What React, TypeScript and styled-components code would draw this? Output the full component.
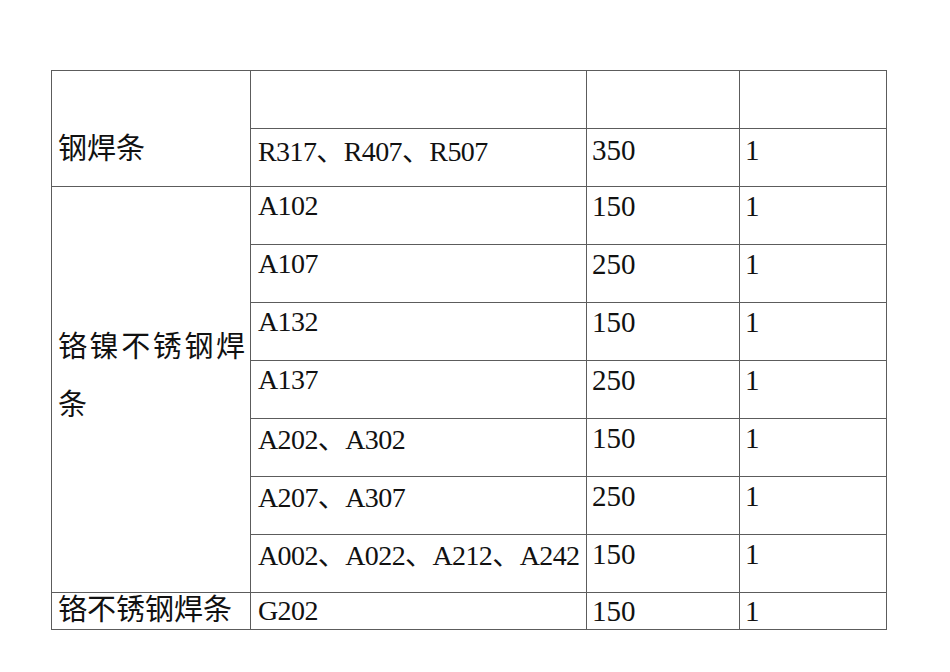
import React from "react";
import styled, { createGlobalStyle } from "styled-components";

const GlobalStyle = createGlobalStyle`
  html, body {
    margin: 0;
    padding: 0;
    background: #ffffff;
  }
  body {
    font-family: "Liberation Serif", "Noto Sans CJK SC", serif;
    color: #111111;
  }
`;

const Page = styled.div`
  width: 950px;
  height: 672px;
  box-sizing: border-box;
  padding: 70px 0 0 51px;
  overflow: hidden;
`;

const Table = styled.table`
  border-collapse: collapse;
  table-layout: fixed;
  width: 835px;
  font-size: 29px;
`;

const Row = styled.tr<{ $h?: number }>`
  height: ${(p) => p.$h ?? 58}px;
`;

const Cell = styled.td<{ $pt?: number; $pl?: number; $code?: boolean }>`
  border: 1px solid #5c5c5c;
  vertical-align: top;
  padding: ${(p) => p.$pt ?? 1}px 2px 0 ${(p) => p.$pl ?? 5}px;
  line-height: 36px;
  font-size: ${(p) => (p.$code ? 28 : 29)}px;
  letter-spacing: ${(p) => (p.$code ? "-0.6px" : "0")};
  white-space: nowrap;
  overflow: hidden;
`;

const Label = styled.td<{ $pt?: number }>`
  border: 1px solid #5c5c5c;
  vertical-align: top;
  padding: ${(p) => p.$pt ?? 0}px 5px 0 6px;
  line-height: 34px;
  white-space: nowrap;
  overflow: hidden;
`;

const WrapLabel = styled.td`
  border: 1px solid #5c5c5c;
  vertical-align: top;
  padding: 131px 5px 0 6px;
  line-height: 58px;
  text-align: justify;
`;

type Item = { code: string; amount: string; count: string; drop?: number };

const chromeNickel: Item[] = [
  { code: "A102", amount: "150", count: "1" },
  { code: "A107", amount: "250", count: "1" },
  { code: "A132", amount: "150", count: "1" },
  { code: "A137", amount: "250", count: "1" },
  { code: "A202、A302", amount: "150", count: "1", drop: 2 },
  { code: "A207、A307", amount: "250", count: "1", drop: 2 },
  { code: "A002、A022、A212、A242", amount: "150", count: "1", drop: 2 },
];

export default function App() {
  return (
    <Page>
      <GlobalStyle />
      <Table>
        <colgroup>
          <col style={{ width: 199 }} />
          <col style={{ width: 336 }} />
          <col style={{ width: 153 }} />
          <col style={{ width: 147 }} />
        </colgroup>
        <tbody>
          <Row>
            <Label rowSpan={2} $pt={61}>钢焊条</Label>
            <Cell $code $pl={7} />
            <Cell />
            <Cell />
          </Row>
          <Row>
            <Cell $code $pl={7} $pt={5}>R317、R407、R507</Cell>
            <Cell $pt={3}>350</Cell>
            <Cell $pt={3}>1</Cell>
          </Row>
          {chromeNickel.map((it, i) => (
            <Row key={it.code}>
              {i === 0 && <WrapLabel rowSpan={chromeNickel.length}>铬镍不锈钢焊条</WrapLabel>}
              <Cell $code $pl={7} $pt={1 + (it.drop ?? 0)}>{it.code}</Cell>
              <Cell>{it.amount}</Cell>
              <Cell>{it.count}</Cell>
            </Row>
          ))}
          <Row $h={35}>
            <Label $pt={0}>铬不锈钢焊条</Label>
            <Cell $code $pl={7} $pt={0}>G202</Cell>
            <Cell $pt={0}>150</Cell>
            <Cell $pt={0}>1</Cell>
          </Row>
        </tbody>
      </Table>
    </Page>
  );
}
